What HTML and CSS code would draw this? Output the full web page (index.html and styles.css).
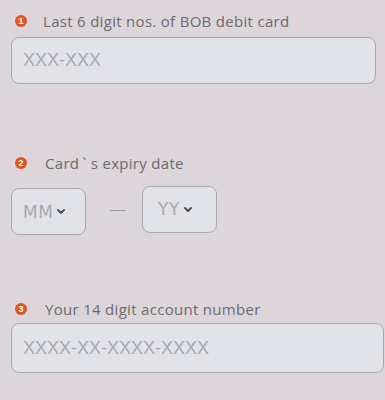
FILE: index.html
```html
<!DOCTYPE html>
<html>
<head>
<meta charset="utf-8">
<link rel="stylesheet" href="styles.css">
</head>
<body>
<div class="page">
  <section class="step step-card">
    <div class="step-label"><span class="badge">1</span><span class="label-text label-card">Last 6 digit nos. of BOB debit card</span></div>
    <div class="text-input input-card"><span class="placeholder">XXX-XXX</span></div>
  </section>

  <section class="step step-expiry">
    <div class="step-label"><span class="badge">2</span><span class="label-text label-expiry">Card<span class="tick">`</span>s expiry date</span></div>
    <div class="expiry-row">
      <div class="select-box select-mm"><span class="placeholder small">MM</span>
        <svg class="chev" width="8" height="5" viewBox="0 0 8 5"><path d="M1 1 L4 4 L7 1" fill="none" stroke="#4b494e" stroke-width="1.8" stroke-linecap="round" stroke-linejoin="round"/></svg>
      </div>
      <span class="dash"></span>
      <div class="select-box select-yy"><span class="placeholder small">YY</span>
        <svg class="chev" width="8" height="5" viewBox="0 0 8 5"><path d="M1 1 L4 4 L7 1" fill="none" stroke="#4b494e" stroke-width="1.8" stroke-linecap="round" stroke-linejoin="round"/></svg>
      </div>
    </div>
  </section>

  <section class="step step-account">
    <div class="step-label"><span class="badge">3</span><span class="label-text label-account">Your 14 digit account number</span></div>
    <div class="text-input input-account"><span class="placeholder">XXXX-XX-XXXX-XXXX</span></div>
  </section>
</div>
</body>
</html>
```

FILE: styles.css
```css
html, body {
  margin: 0;
  padding: 0;
  background: #dcd6da;
}
.page {
  width: 385px;
  height: 400px;
  box-sizing: border-box;
  padding: 12px 0 0 11px;
  display: flex;
  flex-direction: column;
  font-family: "Open Sans", Lato, sans-serif;
}
.step-label {
  display: flex;
  align-items: center;
  height: 18px;
  padding-left: 4px;
}
.badge {
  width: 12px;
  height: 12px;
  border-radius: 50%;
  background: #e0581f;
  color: #fff;
  font-family: "Liberation Sans", Arial, sans-serif;
  font-size: 9px;
  font-weight: 700;
  line-height: 12px;
  text-align: center;
  flex-shrink: 0;
}
.label-text {
  margin-left: 16px;
  font-size: 15px;
  letter-spacing: 0.3px;
  color: #6d696f;
  white-space: nowrap;
}
.label-account {
  margin-left: 18px;
}
.label-expiry {
  margin-left: 18px;
}
.tick {
  margin: 0 4px 0 3px;
}
.text-input {
  box-sizing: border-box;
  background: #e2e3e8;
  border: 1px solid #aaa8ad;
  border-radius: 8px;
  display: flex;
  align-items: center;
  padding-left: 11px;
}
.placeholder {
  font-family: "Liberation Sans", Arial, sans-serif;
  font-size: 18px;
  color: #a9a8ad;
}
.placeholder.small {
  font-family: "DejaVu Sans", sans-serif;
  font-size: 17px;
  letter-spacing: 0.5px;
}
.input-card {
  margin-top: 7px;
  width: 365px;
  height: 47px;
}
.step-expiry {
  margin-top: 70px;
}
.expiry-row {
  margin-top: 14px;
  display: flex;
  align-items: center;
}
.select-box {
  box-sizing: border-box;
  width: 75px;
  height: 47px;
  background: #e2e3e8;
  border: 1px solid #aaa8ad;
  border-radius: 8px;
  display: flex;
  align-items: center;
}
.select-mm {
  padding-left: 11px;
  margin-top: 2px;
}
.select-yy {
  padding-left: 15px;
  margin-top: -3px;
}
.chev {
  margin-left: 4px;
}
.dash {
  width: 16px;
  height: 1.5px;
  background: #9c9a9f;
  margin: 0 16px 0 24px;
}
.step-account {
  margin-top: 65px;
}
.input-account {
  margin-top: 5px;
  width: 373px;
  height: 50px;
}
```
